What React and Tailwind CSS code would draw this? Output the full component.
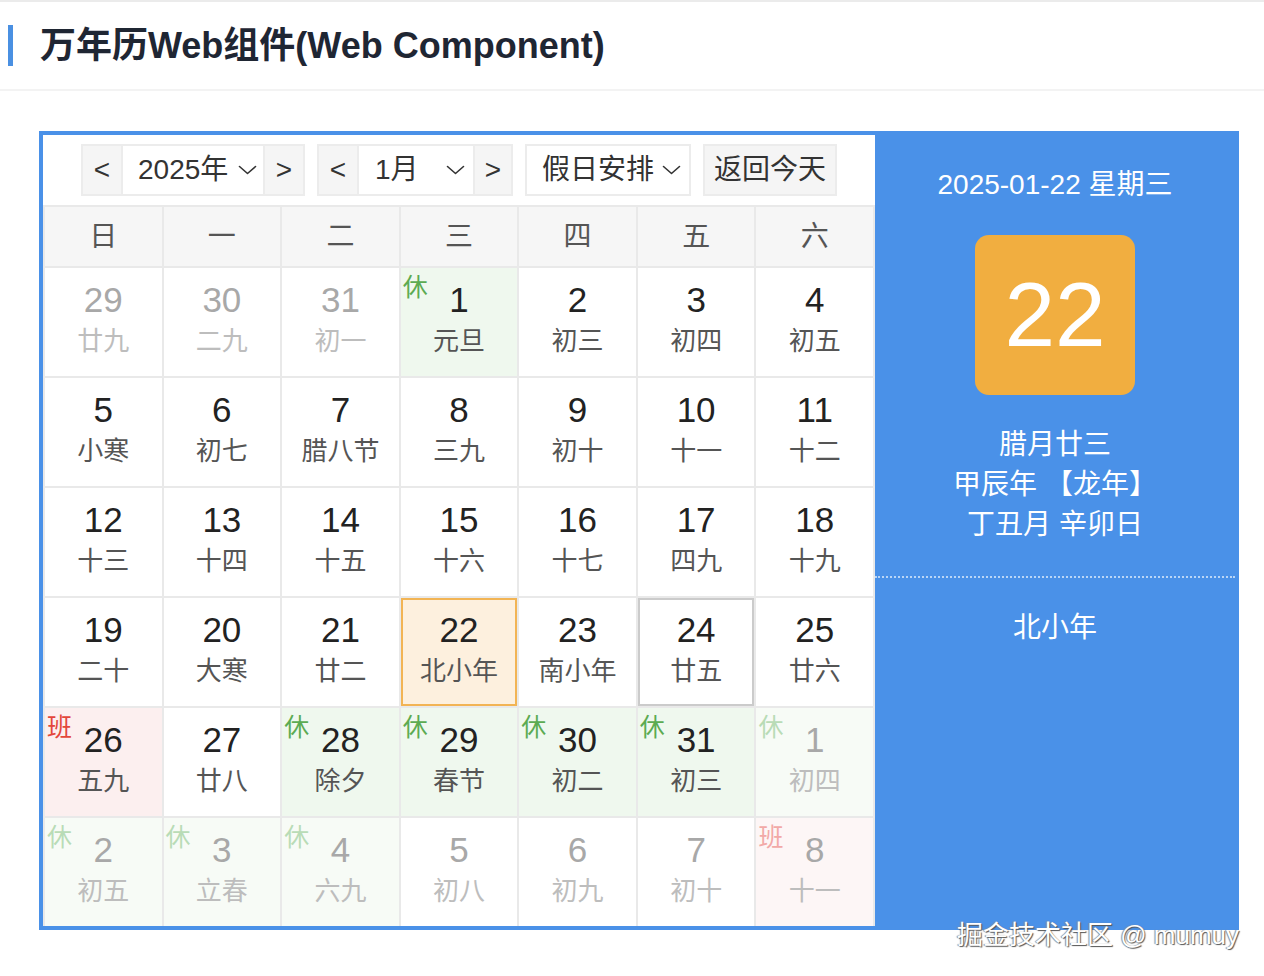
import React from 'react';

const FONT = { fontFamily: '"Liberation Sans", Arial, "Noto Sans CJK SC", sans-serif' };

// d: day, l: lunar, o: other month, t: 'rest' | 'work', today, hover
const weeks = [
  [
    { d: 29, l: '廿九', o: true },
    { d: 30, l: '二九', o: true },
    { d: 31, l: '初一', o: true },
    { d: 1, l: '元旦', t: 'rest' },
    { d: 2, l: '初三' },
    { d: 3, l: '初四' },
    { d: 4, l: '初五' },
  ],
  [
    { d: 5, l: '小寒' },
    { d: 6, l: '初七' },
    { d: 7, l: '腊八节' },
    { d: 8, l: '三九' },
    { d: 9, l: '初十' },
    { d: 10, l: '十一' },
    { d: 11, l: '十二' },
  ],
  [
    { d: 12, l: '十三' },
    { d: 13, l: '十四' },
    { d: 14, l: '十五' },
    { d: 15, l: '十六' },
    { d: 16, l: '十七' },
    { d: 17, l: '四九' },
    { d: 18, l: '十九' },
  ],
  [
    { d: 19, l: '二十' },
    { d: 20, l: '大寒' },
    { d: 21, l: '廿二' },
    { d: 22, l: '北小年', today: true },
    { d: 23, l: '南小年' },
    { d: 24, l: '廿五', hover: true },
    { d: 25, l: '廿六' },
  ],
  [
    { d: 26, l: '五九', t: 'work' },
    { d: 27, l: '廿八' },
    { d: 28, l: '除夕', t: 'rest' },
    { d: 29, l: '春节', t: 'rest' },
    { d: 30, l: '初二', t: 'rest' },
    { d: 31, l: '初三', t: 'rest' },
    { d: 1, l: '初四', t: 'rest', o: true },
  ],
  [
    { d: 2, l: '初五', t: 'rest', o: true },
    { d: 3, l: '立春', t: 'rest', o: true },
    { d: 4, l: '六九', t: 'rest', o: true },
    { d: 5, l: '初八', o: true },
    { d: 6, l: '初九', o: true },
    { d: 7, l: '初十', o: true },
    { d: 8, l: '十一', t: 'work', o: true },
  ],
];

const weekdays = ['日', '一', '二', '三', '四', '五', '六'];

function Chevron() {
  return (
    <svg width="19" height="10" viewBox="0 0 19 10" fill="none" className="shrink-0">
      <polyline points="1.5,1.5 9.5,8.5 17.5,1.5" stroke="#333" strokeWidth="1.6" strokeLinecap="round" strokeLinejoin="round" />
    </svg>
  );
}

function cellBg(c) {
  if (c.today) return 'bg-[#fdf0de] border-2 border-[#f2b454]';
  if (c.hover) return 'bg-white border-2 border-[#cbcbcb]';
  if (c.t === 'rest') return c.o ? 'bg-[#f7fbf6]' : 'bg-[#eff8ee]';
  if (c.t === 'work') return c.o ? 'bg-[#fdf6f6]' : 'bg-[#fcefef]';
  return 'bg-white';
}

function DayCell({ c }) {
  return (
    <div className={`relative h-[108px] flex flex-col items-center justify-center pb-[4px] ${cellBg(c)}`}>
      {c.t && (
        <span
          className={`absolute left-[2px] top-[7px] text-[25px] leading-none ${
            c.t === 'rest'
              ? c.o ? 'text-[#b9dcb6]' : 'text-[#5cab52]'
              : c.o ? 'text-[#f2a9a7]' : 'text-[#e3473b]'
          }`}
        >
          {c.t === 'rest' ? '休' : '班'}
        </span>
      )}
      <span className={`text-[35px] leading-[42px] ${c.o ? 'text-[#a8a8a8]' : 'text-[#222]'}`}>{c.d}</span>
      <span className={`text-[26px] leading-[40px] ${c.o ? 'text-[#bdbdbd]' : 'text-[#555]'}`}>{c.l}</span>
    </div>
  );
}

function Toolbar() {
  return (
    <div className="h-[70px] flex items-center justify-center gap-[12px] text-[28px] text-[#333]">
      <div className="flex h-[52px] border-2 border-[#ececec]">
        <div className="w-[38px] bg-[#f5f5f5] flex items-center justify-center">&lt;</div>
        <div className="w-[144px] bg-white border-x-2 border-[#ececec] flex items-center pl-[15px] gap-[10px]">
          <span>2025年</span>
          <Chevron />
        </div>
        <div className="w-[38px] bg-[#f5f5f5] flex items-center justify-center">&gt;</div>
      </div>
      <div className="flex h-[52px] border-2 border-[#ececec]">
        <div className="w-[38px] bg-[#f5f5f5] flex items-center justify-center">&lt;</div>
        <div className="w-[118px] bg-white border-x-2 border-[#ececec] flex items-center pl-[16px] pr-[8px] justify-between">
          <span>1月</span>
          <Chevron />
        </div>
        <div className="w-[36px] bg-[#f5f5f5] flex items-center justify-center">&gt;</div>
      </div>
      <div className="h-[52px] w-[166px] border-2 border-[#ececec] bg-white flex items-center pl-[15px] gap-[8px]">
        <span>假日安排</span>
        <Chevron />
      </div>
      <div className="h-[52px] w-[134px] border-2 border-[#ececec] bg-[#f5f5f5] flex items-center justify-center">
        返回今天
      </div>
    </div>
  );
}

function InfoPanel() {
  return (
    <div className="flex-1 bg-[#4a91e8] text-white flex flex-col items-center text-[28px]">
      <div className="mt-[30px] leading-[40px]">2025-01-22 星期三</div>
      <div className="mt-[30px] w-[160px] h-[160px] rounded-[14px] bg-[#f1ae40] flex items-center justify-center">
        <span className="text-[91px] leading-none pb-[2px]">22</span>
      </div>
      <div className="mt-[30px] leading-[40px] text-center">
        <div>腊月廿三</div>
        <div>甲辰年 【龙年】</div>
        <div>丁丑月 辛卯日</div>
      </div>
      <div className="mt-[31px] w-full border-t-2 border-dotted border-[#b9d5f6]" />
      <div className="mt-[30px] leading-[40px]">北小年</div>
    </div>
  );
}

export default function App() {
  return (
    <div className="relative min-h-[976px] bg-white" style={FONT}>
      <header className="h-[91px] border-t-2 border-b-2 border-t-[#ebebeb] border-b-[#f3f3f3] flex items-center pl-[8px]">
        <div className="w-[5px] h-[41px] bg-[#4a90e2]" />
        <h1 className="ml-[27px] text-[36px] font-bold text-[#1f2633] leading-none">万年历Web组件(Web Component)</h1>
      </header>

      <div className="ml-[39px] mt-[40px] w-[1200px] h-[799px] border-4 border-[#4a91e8] flex">
        <div className="w-[832px] bg-white flex flex-col">
          <Toolbar />
          <div className="grid grid-cols-7 gap-[2px] pt-[2px] pl-[2px] pr-[2px] bg-[#e9e9e9]">
            {weekdays.map((w) => (
              <div key={w} className="h-[59px] bg-[#f6f6f6] flex items-center justify-center text-[28px] text-[#555]">
                {w}
              </div>
            ))}
            {weeks.flat().map((c, i) => (
              <DayCell key={i} c={c} />
            ))}
          </div>
        </div>
        <InfoPanel />
      </div>

      <div className="absolute left-[957px] top-[916px] text-[26px] leading-[38px] text-white [text-shadow:1px_1px_1px_#555,-1px_0_1px_#888]">
        掘金技术社区 @ mumuy
      </div>
    </div>
  );
}
